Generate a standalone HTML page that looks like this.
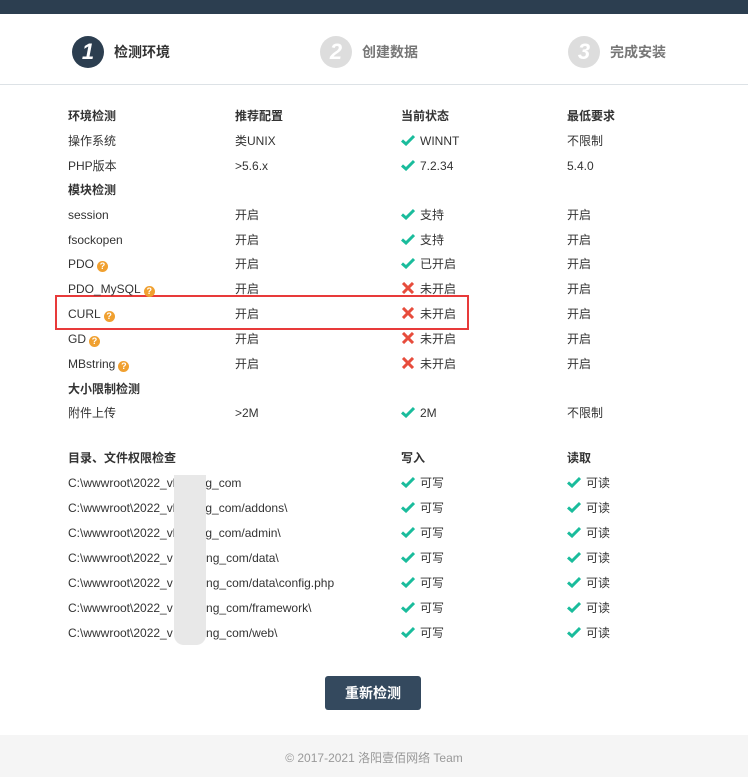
<!DOCTYPE html>
<html><head><meta charset="utf-8"><style>
*{margin:0;padding:0;box-sizing:border-box}
body{width:748px;height:777px;position:relative;background:#fff;font-family:"Liberation Sans","Noto Sans CJK SC",sans-serif;font-size:12px;color:#333;overflow:hidden}
.top{position:absolute;left:0;top:0;width:748px;height:14px;background:#2c3e50}
.line{position:absolute;left:0;top:84px;width:748px;height:1px;background:#dde2e6}
.step{position:absolute;top:36px;height:32px;display:flex;align-items:center}
.step .n{width:32px;height:32px;border-radius:50%;background:#ddd;color:#fff;font-style:italic;font-weight:bold;font-size:22px;display:flex;align-items:center;justify-content:center;margin-right:10px}
.step span{font-size:14px;color:#777;font-weight:bold}
.step.on .n{background:#2c3e50}
.step.on span{color:#333}
.t{position:absolute;line-height:16px;white-space:nowrap}
.b{font-weight:bold}
.ok,.no{display:inline-block;width:14px;height:12px;vertical-align:-1px;margin-right:5px}
.q{display:inline-block;width:11px;height:11px;border-radius:50%;background:#f0a030;color:#fff;font-size:9px;font-weight:bold;text-align:center;line-height:11px;vertical-align:-1px;margin-left:3px}
.red{position:absolute;left:55px;top:295px;width:414px;height:35px;border:2px solid #e83a3a}
.blur{position:absolute;left:174px;top:475px;width:32px;height:170px;background:#e8e8e8;border-radius:0 0 10px 10px}
.btn{position:absolute;left:325px;top:676px;width:96px;height:34px;background:#34495e;border-radius:3px;color:#fff;font-size:14px;text-align:center;line-height:34px;font-weight:bold}
.foot{position:absolute;left:0;top:735px;width:748px;height:42px;background:#f5f5f5;text-align:center;line-height:46px;color:#999;font-size:12px}
</style></head><body>
<div class="top"></div>
<div class="step on" style="left:72px"><div class="n">1</div><span>检测环境</span></div>
<div class="step" style="left:320px"><div class="n">2</div><span>创建数据</span></div>
<div class="step" style="left:568px"><div class="n">3</div><span>完成安装</span></div>
<div class="line"></div>
<svg width="0" height="0" style="position:absolute"><defs>
<symbol id="ck" viewBox="0 0 14 12"><path d="M1 6.5 L5 10 L13 2" fill="none" stroke="#1abc9c" stroke-width="3"/></symbol>
<symbol id="x" viewBox="0 0 14 12"><path d="M2 1 L12 11 M12 1 L2 11" fill="none" stroke="#e74c3c" stroke-width="3"/></symbol>
</defs></svg>
<div class="red"></div>
<div class="btn">重新检测</div>
<div class="foot">© 2017-2021 洛阳壹佰网络 Team</div>
<div class="t b" style="left:68px;top:108px">环境检测</div><div class="t b" style="left:235px;top:108px">推荐配置</div><div class="t b" style="left:401px;top:108px">当前状态</div><div class="t b" style="left:567px;top:108px">最低要求</div>
<div class="t" style="left:68px;top:133px">操作系统</div><div class="t" style="left:235px;top:133px">类UNIX</div><div class="t" style="left:401px;top:133px"><svg class="ok"><use href="#ck"/></svg>WINNT</div><div class="t" style="left:567px;top:133px">不限制</div>
<div class="t" style="left:68px;top:158px">PHP版本</div><div class="t" style="left:235px;top:158px">&gt;5.6.x</div><div class="t" style="left:401px;top:158px"><svg class="ok"><use href="#ck"/></svg>7.2.34</div><div class="t" style="left:567px;top:158px">5.4.0</div>
<div class="t b" style="left:68px;top:182px">模块检测</div>
<div class="t" style="left:68px;top:207px">session</div><div class="t" style="left:235px;top:207px">开启</div><div class="t" style="left:401px;top:207px"><svg class="ok"><use href="#ck"/></svg>支持</div><div class="t" style="left:567px;top:207px">开启</div>
<div class="t" style="left:68px;top:232px">fsockopen</div><div class="t" style="left:235px;top:232px">开启</div><div class="t" style="left:401px;top:232px"><svg class="ok"><use href="#ck"/></svg>支持</div><div class="t" style="left:567px;top:232px">开启</div>
<div class="t" style="left:68px;top:256px">PDO<span class="q">?</span></div><div class="t" style="left:235px;top:256px">开启</div><div class="t" style="left:401px;top:256px"><svg class="ok"><use href="#ck"/></svg>已开启</div><div class="t" style="left:567px;top:256px">开启</div>
<div class="t" style="left:68px;top:281px">PDO_MySQL<span class="q">?</span></div><div class="t" style="left:235px;top:281px">开启</div><div class="t" style="left:401px;top:281px"><svg class="no"><use href="#x"/></svg>未开启</div><div class="t" style="left:567px;top:281px">开启</div>
<div class="t" style="left:68px;top:306px">CURL<span class="q">?</span></div><div class="t" style="left:235px;top:306px">开启</div><div class="t" style="left:401px;top:306px"><svg class="no"><use href="#x"/></svg>未开启</div><div class="t" style="left:567px;top:306px">开启</div>
<div class="t" style="left:68px;top:331px">GD<span class="q">?</span></div><div class="t" style="left:235px;top:331px">开启</div><div class="t" style="left:401px;top:331px"><svg class="no"><use href="#x"/></svg>未开启</div><div class="t" style="left:567px;top:331px">开启</div>
<div class="t" style="left:68px;top:356px">MBstring<span class="q">?</span></div><div class="t" style="left:235px;top:356px">开启</div><div class="t" style="left:401px;top:356px"><svg class="no"><use href="#x"/></svg>未开启</div><div class="t" style="left:567px;top:356px">开启</div>
<div class="t b" style="left:68px;top:381px">大小限制检测</div>
<div class="t" style="left:68px;top:405px">附件上传</div><div class="t" style="left:235px;top:405px">&gt;2M</div><div class="t" style="left:401px;top:405px"><svg class="ok"><use href="#ck"/></svg>2M</div><div class="t" style="left:567px;top:405px">不限制</div>
<div class="t b" style="left:68px;top:450px">目录、文件权限检查</div><div class="t b" style="left:401px;top:450px">写入</div><div class="t b" style="left:567px;top:450px">读取</div>
<div class="t" style="left:68px;top:475px">C:\wwwroot\2022_vl&nbsp;&nbsp;&nbsp;&nbsp;&nbsp;&nbsp;&nbsp;&nbsp;&nbsp;g_com</div><div class="t" style="left:401px;top:475px"><svg class="ok"><use href="#ck"/></svg>可写</div><div class="t" style="left:567px;top:475px"><svg class="ok"><use href="#ck"/></svg>可读</div>
<div class="t" style="left:68px;top:500px">C:\wwwroot\2022_vl&nbsp;&nbsp;&nbsp;&nbsp;&nbsp;&nbsp;&nbsp;&nbsp;&nbsp;g_com/addons\</div><div class="t" style="left:401px;top:500px"><svg class="ok"><use href="#ck"/></svg>可写</div><div class="t" style="left:567px;top:500px"><svg class="ok"><use href="#ck"/></svg>可读</div>
<div class="t" style="left:68px;top:525px">C:\wwwroot\2022_vl&nbsp;&nbsp;&nbsp;&nbsp;&nbsp;&nbsp;&nbsp;&nbsp;&nbsp;g_com/admin\</div><div class="t" style="left:401px;top:525px"><svg class="ok"><use href="#ck"/></svg>可写</div><div class="t" style="left:567px;top:525px"><svg class="ok"><use href="#ck"/></svg>可读</div>
<div class="t" style="left:68px;top:550px">C:\wwwroot\2022_v&nbsp;&nbsp;&nbsp;&nbsp;&nbsp;&nbsp;&nbsp;&nbsp;&nbsp;&nbsp;ng_com/data\</div><div class="t" style="left:401px;top:550px"><svg class="ok"><use href="#ck"/></svg>可写</div><div class="t" style="left:567px;top:550px"><svg class="ok"><use href="#ck"/></svg>可读</div>
<div class="t" style="left:68px;top:575px">C:\wwwroot\2022_v&nbsp;&nbsp;&nbsp;&nbsp;&nbsp;&nbsp;&nbsp;&nbsp;&nbsp;&nbsp;ng_com/data\config.php</div><div class="t" style="left:401px;top:575px"><svg class="ok"><use href="#ck"/></svg>可写</div><div class="t" style="left:567px;top:575px"><svg class="ok"><use href="#ck"/></svg>可读</div>
<div class="t" style="left:68px;top:600px">C:\wwwroot\2022_v&nbsp;&nbsp;&nbsp;&nbsp;&nbsp;&nbsp;&nbsp;&nbsp;&nbsp;&nbsp;ng_com/framework\</div><div class="t" style="left:401px;top:600px"><svg class="ok"><use href="#ck"/></svg>可写</div><div class="t" style="left:567px;top:600px"><svg class="ok"><use href="#ck"/></svg>可读</div>
<div class="t" style="left:68px;top:625px">C:\wwwroot\2022_v&nbsp;&nbsp;&nbsp;&nbsp;&nbsp;&nbsp;&nbsp;&nbsp;&nbsp;&nbsp;ng_com/web\</div><div class="t" style="left:401px;top:625px"><svg class="ok"><use href="#ck"/></svg>可写</div><div class="t" style="left:567px;top:625px"><svg class="ok"><use href="#ck"/></svg>可读</div>
<div class="blur"></div>
</body></html>
